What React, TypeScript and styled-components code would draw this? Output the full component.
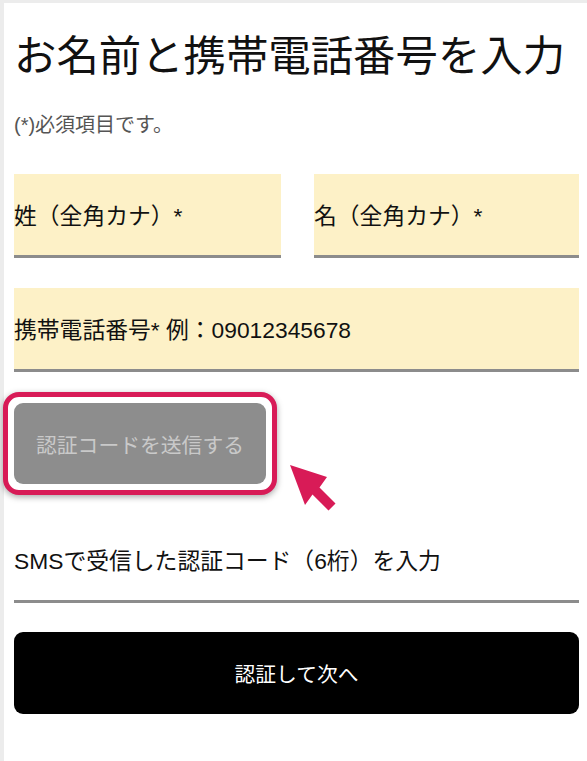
import { styled, createGlobalStyle } from 'styled-components';

const GlobalStyle = createGlobalStyle`
  html, body {
    margin: 0;
    padding: 0;
    background: #ececec;
  }
  body {
    font-family: "Liberation Sans", "Noto Sans CJK JP", sans-serif;
    color: #111;
  }
`;

function SendArrow() {
  return (
    <Styled.Arrow width="50" height="54" viewBox="0 0 50 54" aria-hidden="true">
      <polygon
        points="2,4 39,16 31.5,26.5 47.5,42.5 40.5,49.5 24.5,33.5 17,44"
        fill="#d81b57"
      />
    </Styled.Arrow>
  );
}

function App() {
  return (
    <>
      <GlobalStyle />
      <Styled.Page>
        <Styled.Title>お名前と携帯電話番号を入力</Styled.Title>
        <Styled.Note>(*)必須項目です。</Styled.Note>

        <Styled.FieldRow $cols={2}>
          <Styled.Field>姓（全角カナ）*</Styled.Field>
          <Styled.Field>名（全角カナ）*</Styled.Field>
        </Styled.FieldRow>

        <Styled.FieldRow $cols={1}>
          <Styled.Field>携帯電話番号* 例：09012345678</Styled.Field>
        </Styled.FieldRow>

        <Styled.SendRow>
          <Styled.Highlight>
            <Styled.SendButton type="button" disabled>
              認証コードを送信する
            </Styled.SendButton>
          </Styled.Highlight>
          <SendArrow />
        </Styled.SendRow>

        <Styled.FieldRow $cols={1} $gap={29}>
          <Styled.Field $plain>SMSで受信した認証コード（6桁）を入力</Styled.Field>
        </Styled.FieldRow>

        <Styled.SubmitButton type="button">認証して次へ</Styled.SubmitButton>
      </Styled.Page>
    </>
  );
}

export default App;

const Styled = {
  Page: styled.main`
    width: 583px;
    margin: 3px 0 0 4px;
    min-height: 758px;
    box-sizing: border-box;
    background: #fff;
    padding: 29px 8px 40px 10px;
    display: flex;
    flex-direction: column;
  `,

  Title: styled.h1`
    margin: 0;
    font-size: 42.4px;
    line-height: 50px;
    font-weight: 400;
    color: #111;
    white-space: nowrap;
  `,

  Note: styled.p`
    margin: 30px 0 36px;
    font-size: 20px;
    line-height: 26px;
    color: #555;
  `,

  FieldRow: styled.div<{ $cols: number; $gap?: number }>`
    display: grid;
    grid-template-columns: ${(p) => (p.$cols === 2 ? '267px 1fr' : '1fr')};
    column-gap: 33px;
    margin-bottom: ${(p) => p.$gap ?? 30}px;
  `,

  Field: styled.div<{ $plain?: boolean }>`
    height: 84px;
    min-width: 0;
    box-sizing: border-box;
    display: flex;
    align-items: center;
    background: ${(p) => (p.$plain ? 'transparent' : '#fdf1c7')};
    border-bottom: 3px solid #8c8c8c;
    font-size: 22.8px;
    color: #111;
    white-space: nowrap;
  `,

  SendRow: styled.div`
    display: flex;
    align-items: flex-end;
    margin: -10px 0 24px -11px;
  `,

  Highlight: styled.div`
    border: 5px solid #d81b57;
    border-radius: 16px;
    padding: 6px;
    background: #fff;
    box-shadow: 0 2px 6px rgba(0, 0, 0, 0.35);
  `,

  SendButton: styled.button`
    display: block;
    width: 252px;
    height: 81px;
    border: none;
    border-radius: 9px;
    background: #8d8d8d;
    color: #c9c9c9;
    font-family: inherit;
    font-size: 20.8px;
    cursor: not-allowed;
  `,

  Arrow: styled.svg`
    flex: none;
    margin: 0 0 -20px 11px;
  `,

  SubmitButton: styled.button`
    width: 100%;
    height: 82px;
    border: none;
    border-radius: 9px;
    background: #000;
    color: #fff;
    font-family: inherit;
    font-size: 20.8px;
    cursor: pointer;
  `,
};
